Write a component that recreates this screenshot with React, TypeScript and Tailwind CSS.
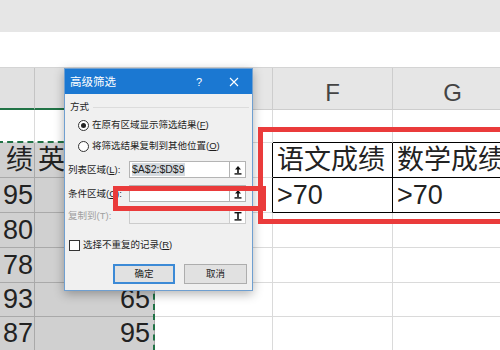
import React from 'react';

type RowProps = { h: string; children: React.ReactNode };

// one spreadsheet row: columns C (partly off screen), D, E, F, G
const Row: React.FC<RowProps> = ({ h, children }) => (
  <div className={`grid grid-cols-[35px_120px_118px_120px_120px] shrink-0 ${h}`}>{children}</div>
);

const selA = 'bg-[#d0d0d0] border-r border-b border-[#a9a9a9] flex items-center justify-end pr-[1px]';
const selD = 'bg-[#d0d0d0] border-r border-b border-[#a9a9a9] flex items-center justify-end pr-[4px]';
const plain = 'border-r border-b border-[#dadada]';
const edge = 'border-r border-b border-r-black border-b-[#dadada]';
const above = 'border-r border-b border-r-[#dadada] border-b-black';
const boxed = 'border-r border-b border-black flex items-center pl-[4px]';

const PickIcon: React.FC = () => (
  <svg width="10" height="10" viewBox="0 0 10 10">
    <path d="M5 1 L2 4.5 H8 Z" fill="#111" />
    <rect x="4.2" y="4" width="1.6" height="4" fill="#111" />
    <rect x="1.5" y="8.2" width="7" height="1.4" fill="#111" />
  </svg>
);

const PickIconOff: React.FC = () => (
  <svg width="10" height="10" viewBox="0 0 10 10">
    <rect x="1.5" y="1" width="7" height="1.4" fill="#111" />
    <rect x="4.2" y="2" width="1.6" height="6" fill="#111" />
    <rect x="1.5" y="8.2" width="7" height="1.4" fill="#111" />
  </svg>
);

const AdvancedFilter: React.FC = () => {
  return (
    <div className="absolute left-[64px] top-[68px] w-[189px] h-[223px] bg-[#f0f0f0] border border-[#6f9fd0] shadow-[0_3px_10px_rgba(0,0,0,0.3)] flex flex-col font-['Liberation_Sans','Noto_Sans_CJK_SC',sans-serif] text-[9.5px] leading-[12px] text-[#1e1e1e]">
      {/* title bar */}
      <div className="h-[25px] bg-[#1b78d2] flex items-center text-white shrink-0">
        <span className="pl-[5px] text-[11.5px] flex-1">高级筛选</span>
        <span className="w-[34px] text-center text-[11px]">?</span>
        <span className="w-[36px] flex justify-center">
          <svg width="10" height="10" viewBox="0 0 10 10">
            <path d="M1 1 L9 9 M9 1 L1 9" stroke="#fff" strokeWidth="1.1" />
          </svg>
        </span>
      </div>

      <div className="flex flex-col px-[3px]">
        {/* group */}
        <div className="mt-[7px] h-[12px] flex items-center pl-[2px]">
          <span>方式</span>
          <span className="ml-[4px] flex-1 h-px bg-[#dcdcdc]" />
        </div>

        <div className="mt-[5px] h-[14px] flex items-center pl-[10px]">
          <span className="w-[11px] h-[11px] rounded-full border border-[#333] bg-white flex items-center justify-center">
            <span className="w-[5px] h-[5px] rounded-full bg-[#222]" />
          </span>
          <span className="ml-[3px]">在原有区域显示筛选结果(<span className="underline">F</span>)</span>
        </div>

        <div className="mt-[7px] h-[14px] flex items-center pl-[10px]">
          <span className="w-[11px] h-[11px] rounded-full border border-[#333] bg-white" />
          <span className="ml-[3px]">将筛选结果复制到其他位置(<span className="underline">O</span>)</span>
        </div>

        {/* ranges */}
        <div className="mt-[8px] h-[17px] flex items-center">
          <span className="w-[61px]">列表区域(<span className="underline">L</span>):</span>
          <div className="w-[101px] h-full bg-white border border-[#b4b4b4] flex items-center pl-[2px]">
            <span className="bg-[#d6dbe0] text-[10.5px] leading-[13px]">$A$2:$D$9</span>
          </div>
          <div className="w-[16px] h-full bg-white border border-l-0 border-[#b4b4b4] flex items-center justify-center">
            <PickIcon />
          </div>
        </div>

        <div className="mt-[7px] h-[17px] flex items-center">
          <span className="w-[61px]">条件区域(<span className="underline">C</span>):</span>
          <div className="w-[101px] h-full bg-white border border-[#b4b4b4]" />
          <div className="w-[16px] h-full bg-white border border-l-0 border-[#b4b4b4] flex items-center justify-center">
            <PickIcon />
          </div>
        </div>

        <div className="mt-[5px] h-[17px] flex items-center">
          <span className="w-[61px] text-[#a0a0a0]">复制到(T):</span>
          <div className="w-[101px] h-full bg-[#f0f0f0] border border-[#cccccc]" />
          <div className="w-[16px] h-full bg-white border border-l-0 border-[#cccccc] flex items-center justify-center">
            <PickIconOff />
          </div>
        </div>

        <div className="mt-[15px] h-[12px] flex items-center pl-[1px]">
          <span className="w-[11px] h-[11px] border border-[#333] bg-white" />
          <span className="ml-[3px]">选择不重复的记录(<span className="underline">R</span>)</span>
        </div>

        {/* buttons */}
        <div className="mt-[13px] h-[20px] flex justify-end gap-[9px] pr-[2px]">
          <button className="w-[62px] h-full bg-[#e1e1e1] border-2 border-[#3c8ad6]">确定</button>
          <button className="w-[63px] h-full bg-[#e1e1e1] border border-[#adadad]">取消</button>
        </div>
      </div>
    </div>
  );
};

const App: React.FC = () => {
  return (
    <div className="relative w-[500px] h-[350px] overflow-hidden bg-white font-['Liberation_Sans','Noto_Sans_CJK_SC',sans-serif] text-[27px] leading-none text-[#222]">
      <div className="flex flex-col">
        {/* ribbon + formula bar */}
        <div className="h-[32px] bg-[#e6e6e6] shrink-0" />
        <div className="h-[36px] bg-white border-b border-[#d4d4d4] shrink-0" />

        {/* column headers */}
        <Row h="h-[42px]">
          <div className="bg-[#e1e1e1] border-r border-r-[#c4c4c4] border-b-2 border-b-[#217346]" />
          <div className="bg-[#e1e1e1] border-r border-r-[#c4c4c4] border-b-2 border-b-[#217346] flex items-center justify-center pt-[8px] text-[24px] text-[#217346]">D</div>
          <div className="bg-[#e6e6e6] border-r border-b border-[#cdcdcd] flex items-center justify-center pt-[8px] text-[24px] text-[#444]">E</div>
          <div className="bg-[#e6e6e6] border-r border-b border-[#cdcdcd] flex items-center justify-center pt-[8px] text-[24px] text-[#444]">F</div>
          <div className="bg-[#e6e6e6] border-r border-b border-[#cdcdcd] flex items-center justify-center pt-[8px] text-[24px] text-[#444]">G</div>
        </Row>

        <Row h="h-[33px]">
          <div className={plain} />
          <div className={plain} />
          <div className={plain} />
          <div className={above} />
          <div className={above} />
        </Row>

        <Row h="h-[35px]">
          <div className={selA}>绩</div>
          <div className="bg-[#d0d0d0] border-r border-b border-[#a9a9a9] flex items-center pl-[3px]">英语成绩</div>
          <div className={edge} />
          <div className={boxed}>语文成绩</div>
          <div className={boxed}>数学成绩</div>
        </Row>

        <Row h="h-[35px]">
          <div className={selA}>95</div>
          <div className={selD}>88</div>
          <div className={edge} />
          <div className={boxed}>&gt;70</div>
          <div className={boxed}>&gt;70</div>
        </Row>

        <Row h="h-[35px]">
          <div className={selA}>80</div>
          <div className={selD}>72</div>
          <div className={plain} />
          <div className={plain} />
          <div className={plain} />
        </Row>

        <Row h="h-[35px]">
          <div className={selA}>78</div>
          <div className={selD}>90</div>
          <div className={plain} />
          <div className={plain} />
          <div className={plain} />
        </Row>

        <Row h="h-[34px]">
          <div className={selA}>93</div>
          <div className={selD}>65</div>
          <div className={plain} />
          <div className={plain} />
          <div className={plain} />
        </Row>

        <Row h="h-[34px]">
          <div className={selA}>87</div>
          <div className={selD}>95</div>
          <div className={plain} />
          <div className={plain} />
          <div className={plain} />
        </Row>
      </div>

      {/* copy marquee */}
      <div className="absolute left-[-3px] top-[141px] w-[158px] h-[230px] border-2 border-dashed border-[#217346]" />

      <AdvancedFilter />

      {/* red annotation boxes */}
      <div className="absolute left-[113px] top-[186px] w-[153px] h-[25px] border-[5px] border-[#ea3b3b]" />
      <div className="absolute left-[258px] top-[127px] w-[260px] h-[97px] border-[5px] border-[#ea3b3b]" />
    </div>
  );
};

export default App;
